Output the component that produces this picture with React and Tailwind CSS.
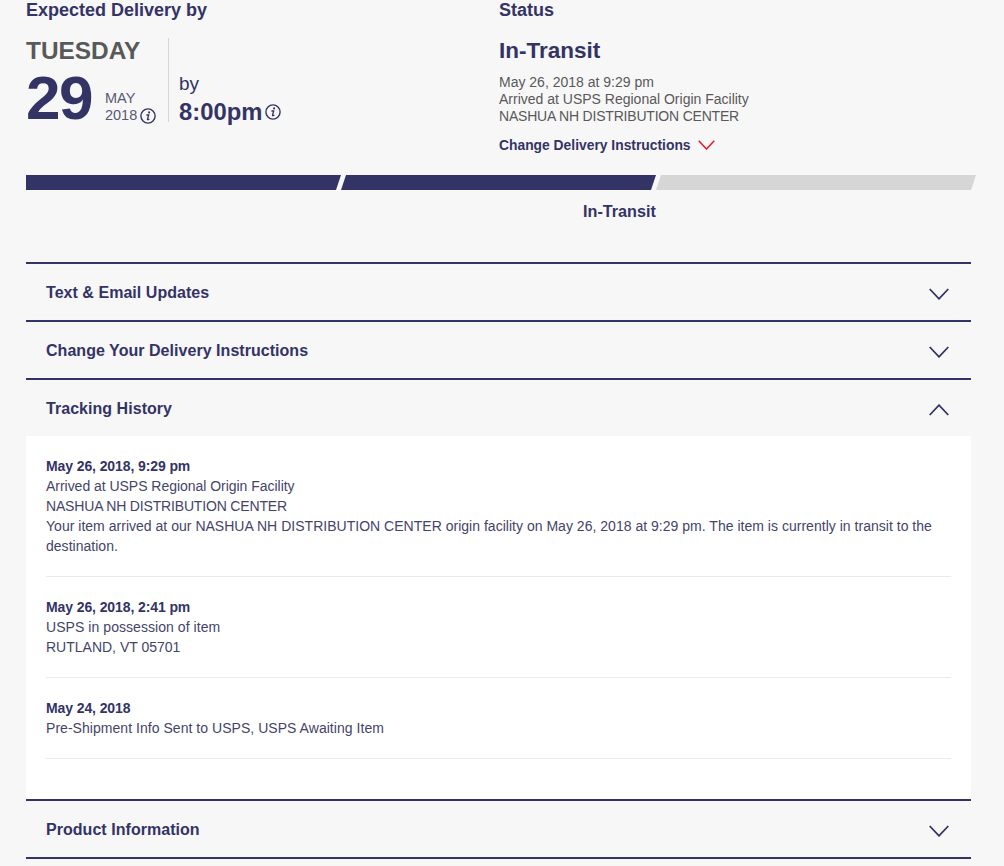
const navy = "text-[#333366]";

function Info() {
  return (
    <svg width="16" height="16" viewBox="0 0 16 16" className="shrink-0" fill="none">
      <circle cx="8" cy="8" r="7.1" stroke="#333366" strokeWidth="1.4" />
      <circle cx="9.1" cy="4.4" r="1.05" fill="#333366" />
      <path d="M6.4 7h2.3L7.5 11.2c-.15.6.5.7 1.8-.3" stroke="#333366" strokeWidth="1.3" />
    </svg>
  );
}

function Chevron({ up, color = "#333366", w = 20, h = 12, sw = 1.8 }) {
  return (
    <svg width={w} height={h} viewBox="0 0 20 12" fill="none">
      <path d={up ? "M0.7 11L10 1.2L19.3 11" : "M0.7 1L10 10.8L19.3 1"} stroke={color} strokeWidth={sw} />
    </svg>
  );
}

function Row({ title, up }) {
  return (
    <div className="h-[58px] border-t-2 border-[#333366] flex items-center justify-between pl-5 pr-[22px]">
      <span className={`pt-0.5 text-[16px] tracking-[0.04px] font-bold ${navy}`}>{title}</span>
      <span className="pt-[3px] flex"><Chevron up={up} /></span>
    </div>
  );
}

function Event({ date, children, h }) {
  return (
    <div className={`${h} border-b border-[#ebebeb] text-[14px] leading-5 text-[#44446a]`}>
      <div className={`tracking-[-0.1px] font-bold ${navy}`}>{date}</div>
      {children}
    </div>
  );
}

export default function App() {
  return (
    <div className="w-[1004px] h-[866px] overflow-hidden bg-[#f7f7f7] font-['Liberation_Sans',Arial,sans-serif]">
      <div className="flex pl-[26px] h-[175px]">
        <div className="w-[473px]">
          <div className={`text-[18px] leading-5 font-bold ${navy}`}>Expected Delivery by</div>
          <div className="flex mt-[18px]">
            <div className="w-[143px] h-[84px] border-r border-[#d6d6d6]">
              <div className="text-[24.4px] leading-[26px] font-bold text-[#595959]">TUESDAY</div>
              <div className="flex mt-[7px]">
                <div className={`text-[62px] leading-[54px] font-bold tracking-[-1.5px] ${navy}`}>29</div>
                <div className="ml-[13px] mt-[19px] text-[14.5px] leading-[17px] text-[#595973]">
                  <div>MAY</div>
                  <div className="flex items-center gap-[3px]">2018<Info /></div>
                </div>
              </div>
            </div>
            <div className="pl-[10px] pt-[36px]">
              <div className={`text-[19px] leading-5 ${navy}`}>by</div>
              <div className={`flex items-center gap-[3px] mt-[6px] text-[23.8px] leading-6 font-bold ${navy}`}>8:00pm<Info /></div>
            </div>
          </div>
        </div>
        <div>
          <div className={`text-[18px] leading-5 font-bold ${navy}`}>Status</div>
          <div className={`mt-[17px] text-[22.5px] leading-7 font-bold ${navy}`}>In-Transit</div>
          <div className="mt-[9px] text-[14px] leading-[17px] text-[#595959]">
            <div>May 26, 2018 at 9:29 pm</div>
            <div>Arrived at USPS Regional Origin Facility</div>
            <div className="tracking-[-0.2px]">NASHUA NH DISTRIBUTION CENTER</div>
          </div>
          <div className={`flex items-center gap-[7px] mt-[12px] text-[13.85px] leading-[16px] font-bold ${navy}`}>
            Change Delivery Instructions
            <Chevron color="#e31b23" w={17} h={10} sw={1.8} />
          </div>
        </div>
      </div>

      <div className="flex pl-[26px] h-[15px]">
        <div className="w-[315px] bg-[#333366] [clip-path:polygon(0_0,100%_0,calc(100%-5px)_100%,0_100%)]" />
        <div className="w-[315px] bg-[#333366] [clip-path:polygon(5px_0,100%_0,calc(100%-5px)_100%,0_100%)]" />
        <div className="w-[320px] bg-[#d6d6d6] [clip-path:polygon(5px_0,100%_0,calc(100%-5px)_100%,0_100%)]" />
      </div>
      <div className={`h-[72px] pl-[583px] pt-[13px] text-[16.2px] leading-[17px] font-bold ${navy}`}>In-Transit</div>

      <div className="ml-[26px] w-[945px]">
        <Row title="Text &amp; Email Updates" />
        <Row title="Change Your Delivery Instructions" />
        <Row title="Tracking History" up />
        <div className="bg-white h-[363px] px-5 pt-5">
          <Event h="h-[121px]" date="May 26, 2018, 9:29 pm">
            <div className="tracking-[-0.03px]">Arrived at USPS Regional Origin Facility</div>
            <div className="tracking-[-0.17px]">NASHUA NH DISTRIBUTION CENTER</div>
            <div className="tracking-[0.02px]">Your item arrived at our NASHUA NH DISTRIBUTION CENTER origin facility on May 26, 2018 at 9:29 pm. The item is currently in transit to the destination.</div>
          </Event>
          <div className="h-5" />
          <Event h="h-[81px]" date="May 26, 2018, 2:41 pm">
            <div className="tracking-[0.06px]">USPS in possession of item</div>
            <div>RUTLAND, VT 05701</div>
          </Event>
          <div className="h-5" />
          <Event h="h-[61px]" date="May 24, 2018">
            <div className="tracking-[0.04px]">Pre-Shipment Info Sent to USPS, USPS Awaiting Item</div>
          </Event>
        </div>
        <Row title="Product Information" />
        <div className="border-t-2 border-[#333366]" />
      </div>
    </div>
  );
}
